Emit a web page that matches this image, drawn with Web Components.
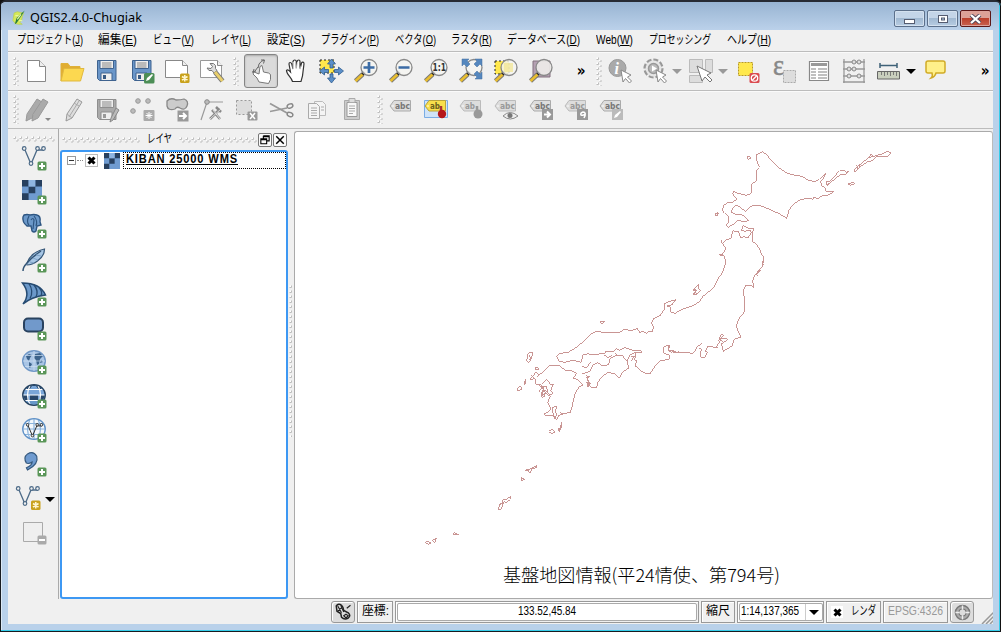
<!DOCTYPE html>
<html lang="ja"><head><meta charset="utf-8"><title>QGIS2.4.0-Chugiak</title>
<style>html,body{margin:0;height:100%;overflow:hidden;background:#111}body{font-family:"Liberation Sans","Noto Sans CJK JP",sans-serif}</style></head>
<body><gis-window></gis-window>
<script>
const define=(name,css,html,init)=>customElements.define(name,class extends HTMLElement{
  constructor(){super();this.attachShadow({mode:'open'})}
  connectedCallback(){this.shadowRoot.innerHTML=`<style>*{box-sizing:border-box}${css}</style>`+(typeof html==='function'?html(this):html);if(init)init(this)}
});
/* One line of text fitted to a given width; the mnemonic letter is underlined. */
define('fit-text',':host{display:block;flex:none;overflow:visible}div{display:inline-block;white-space:nowrap;transform-origin:0 0}',e=>{
  const a=(n,d)=>e.getAttribute(n)||d,k=a('key',''),h=+a('h',16);
  e.style.width=a('w')+'px';e.style.height=h+'px';
  return `<div style="font:${a('weight','400')} ${a('size',12)}px/${h-2}px ${a('font',"Liberation Sans,Noto Sans CJK JP,sans-serif")};height:${h-2}px;vertical-align:top;color:${a('color','#000')};${a('line','')?'text-decoration:underline;':''}letter-spacing:${a('ls','0')}px">${a('text','')}${k?`(<u>${k}</u>)`:''}</div>`},
  e=>{const d=e.shadowRoot.querySelector('div');d.style.transform=`scaleX(${e.getAttribute('w')/d.getBoundingClientRect().width})`});
/* Staggered grip dots, vertical by default. */
define('drag-grip',':host{display:block;flex:none}svg{display:block;width:100%;height:100%}',e=>{
  const h=e.hasAttribute('flat'),s=e.hasAttribute('single');
  const d=(x,y)=>`<rect x="${x}" y="${y}" width="2" height="2" fill="#fff"/><path d="M${x+2} ${y}v2h-2" fill="none" stroke="#bdbdbd"/>`;
  return `<svg><defs><pattern id="p" patternUnits="userSpaceOnUse" width="${h?6:s?5:6}" height="${h?6:5}">${d(.5,.5)}${s?'':d(3,3)}</pattern></defs><rect width="100%" height="100%" fill="url(#p)"/></svg>`});

const plus='<rect x="15.5" y="15.5" width="9" height="9" rx="1.5" fill="#5a9658"/><path d="M20 17v6M17 20h6" stroke="#fff" stroke-width="2"/>';
const star='<rect x="15" y="14.500" width="9.500" height="9.500" rx="1.500" fill="#c9a21c"/><path d="M19.750 16v6.500M17 17.500l5.500 3.500M22.500 17.500l-5.500 3.500" stroke="#fff6cf" stroke-width="1.600"/>';
const floppy=(a,b,c)=>`<path d="M2.500 1.500h18.500v20h-16.500l-2-2z" fill="${a}" stroke="${b}"/><path d="M5 1.500h13.500v8h-13.500z" fill="#eee" stroke="${b}"/><path d="M7 4h9.500M7 6h9.500M7 8h9.500" stroke="#888"/><path d="M6 14h11v7.500h-11z" fill="#eee" stroke="${b}"/><path d="M8 16h3v4h-3z" fill="${c}"/>`;
const lens=(inner,bg='')=>`${bg}<path d="M9 15L1.500 22" stroke="#777" stroke-width="4.500"/><path d="M9 15L1.500 22" stroke="#e9bd2e" stroke-width="2.700"/><path d="M10.500 13l-2 2.500" stroke="#222" stroke-width="3"/><circle cx="15" cy="8.500" r="8" fill="#f4f4f0" fill-opacity=".82" stroke="#888" stroke-width="1.300"/>${inner}`;
const arr='M0-12l4 5h-2.500v4h-3v-4H-4z';
const cur='<path d="M13 11l2 12 2.500-3.500 4 4.500 2-2-4-4 3.500-2z" fill="#fff" stroke="#888"/>';
const tag=(f,s,t='#777',w='abc')=>`<path d="M1 8l4-5.500h16.500v10.500H5z" fill="${f}" stroke="${s}"/><circle cx="4" cy="8" r=".8" fill="#fff"/><text x="6" y="10.800" font-family="DejaVu Sans" font-size="8" font-weight="700" fill="${t}" textLength="${w.length*5}" lengthAdjust="spacingAndGlyphs">${w}</text>`;
const vec=c=>`<path d="M3 4l6 14 6-14h7" fill="none" stroke="${c}" stroke-width="1.300"/><g fill="#f0f0f0" stroke="${c}" stroke-width="1.200"><circle cx="2.200" cy="2.500" r="1.800"/><circle cx="9" cy="17.500" r="1.800"/><circle cx="15.500" cy="2.500" r="1.800"/><circle cx="21.500" cy="2.500" r="1.800"/></g>`;
const checker='<path fill="#6f9bd0" d="M0 0h20v20H0z"/><path fill="#27405f" d="M0 0h6.600v6.600H0zM13.300 0H20v6.600h-6.700zM6.600 6.600h6.700v6.700H6.600zM0 13.300h6.600V20H0z"/><path fill="#8fb5e0" d="M6.600 0h6.700v6.600H6.600z"/>';
const globe=(f,s,g,mid='')=>`<ellipse cx="12" cy="11" rx="11.300" ry="10.300" fill="${f}"/>${mid}<path d="M12 1v20M1 11h22M3 5.500h18M3 16.500h18M8 1.500q-5 9.500 0 19M16 1.500q5 9.500 0 19" fill="none" stroke="${g}" stroke-width="1.200"/><ellipse cx="12" cy="11" rx="11.300" ry="10.300" fill="none" stroke="${s}" stroke-width="1.300"/>`;
const pencil='<path d="M17 1l5 3-10 16-6 3 1-7z" fill="#ddd" stroke="#999"/><path d="M14 5l5 3M7 16l5 4M19 3L9 19" stroke="#aaa" fill="none"/>';
const I={
logo:'<path d="M5 4l5-2 5 1 5 1-2 6-1 6-3 3 4 3h-6l-5-1-4-5z" fill="#d5e85b" stroke="#b7cf45"/><path d="M22 0l-5 8-8 12-3 2 3-10 7-7z" fill="#267b3f"/><path d="M10 14l6-8M7 8h5M13 16h5" stroke="#e7f6a3" stroke-width="2"/>',
new:'<path d="M3.500 1.500h12l6 6v15h-18z" fill="#fff" stroke="#888" transform="translate(-1 0)"/><path d="M14.500 1.500v6h6" fill="#eee" stroke="#888"/>',
open:'<path d="M1 22V4.500h7l2 3h10v3" fill="#e1ad31" stroke="#dfb138"/><path d="M1 22L4 9.500h20L20.500 22z" fill="#fcd850" stroke="#e1b93f"/>',
save:floppy('#6a96c9','#3f638f','#385a83'),
saveas:floppy('#6a96c9','#3f638f','#385a83')+'<rect x="14" y="14" width="10.500" height="10.500" rx="1.500" fill="#4c8e56"/><path d="M16 22l1-3 5-4 1 1-4 5z" fill="#fff"/>',
comp:'<path d="M.5 1.500h17l5 5v12H.5z" fill="#fff" stroke="#888"/><path d="M17.500 1.500v5h5" fill="#eee" stroke="#888"/>'+star,
manage:'<path d="M.5 1.500h17l4 5v12H.5z" fill="#fff" stroke="#999"/><path d="M17.500 1.500v5h5" fill="#eee" stroke="#888"/><path d="M10 4.500q4-1 5.500 2v3l1.500 2-3 2.500-2-2.500H9l-2-2.500 4 .5 1.500-2z" fill="#ddd" stroke="#777"/><path d="M15 13l7.500 9" stroke="#777" stroke-width="5"/><path d="M15 13l7.500 9" stroke="#e9cf6c" stroke-width="3"/>',
touch:'<g transform="translate(1 0)"><path d="M8 23l-2-4-4-4 1-2 5 2 1-7.500 2-1 1.500 6.500 5 1 2 1.500v5l-2 4z" fill="#fff" stroke="#777"/><path d="M1 13l4-1M3 10l-1 4M7 9l1-4q2-3 5-4M10 1l3.500 0-1 3.500M4 12l3-4" fill="none" stroke="#666"/></g>',
pan:'<path d="M8 22.500c-1-4-6-7-6-11 1-1.500 3 .5 4 1.500L4.500 5c0-2 2-2 2.800 0l1.200 5V2.500c.5-2 3-2 3.300 0v7l.7-7c.5-2 3-2 3 0v7.500l1.500-6c.8-1.500 2.500-1 2.500.8l-1.500 12-1.500 5.700z" transform="translate(.5 0)" fill="#fff" stroke="#333" stroke-width="1.200"/><path d="M6.500 6l2 6v-9h2.500v8l2-8h1.500v8l2.500-5v8l-3 7H9z" fill="#fff" opacity=".6"/>',
pansel:'<path d="M1 1h14v13H1z" fill="#ffe84d" stroke="#222" stroke-dasharray="2 2"/>'+[0,90,180,270].map(r=>`<path d="${arr}" transform="translate(12.500 12) rotate(${r})" fill="#5b8fc8" stroke="#315e91" stroke-width=".8"/>`).join(''),
zin:lens('<path d="M15 3v11M9.500 8.500h11" stroke="#3c6ca5" stroke-width="2.700"/>'),
zout:lens('<path d="M9.500 8.500h11" stroke="#3c6ca5" stroke-width="2.700"/>'),
znat:lens('<text x="8.500" y="12" font-family="DejaVu Sans" font-size="10" font-weight="700" fill="#333" textLength="13.500" lengthAdjust="spacingAndGlyphs">1:1</text>'),
zfull:lens('<g fill="#5587be" stroke="#416f9f" stroke-width=".5"><path d="M3 0h7L8 2l3 3-3 3-3-3-2 2zM23 0v7l-2-2-3 3-3-3 3-3-2-2zM23 20h-7l2-2-3-3 3-3 3 3 2-2z"/></g>'),
zsel:lens('','<path d="M1 2h14v13H1z" fill="#ffe84d" stroke="#222" stroke-dasharray="2 2"/>')+'<path d="M10 4h9v9h-9z" fill="#f2e690" opacity=".7"/>',
zlay:'<path d="M4 2h17v16H4z" fill="#b4a0b2" stroke="#83717f"/>'+lens(''),
ident:'<circle cx="9.500" cy="9" r="8.500" fill="#aaa" stroke="#999"/><text x="6.500" y="14.500" font-family="Liberation Serif" font-style="italic" font-weight="700" font-size="16" fill="#fff">i</text>'+cur,
action:'<circle cx="10.500" cy="9.500" r="9" fill="#e6e6e6" stroke="#999" stroke-width="2.200" stroke-dasharray="5 2"/><circle cx="10.500" cy="9.500" r="5" fill="#bbb" stroke="#999" stroke-width="1.500"/><path d="M9 6.500l5 3-5 3z" fill="#fff"/>'+cur,
select:'<path d="M.5.500h13v13H.500zM16.500.500h7v13h-7zM.500 16.500h13v7H.500z" fill="#ddd" stroke="#bbb"/><path d="M8 7l5 15 3-4 5 5 2-2-5-5 4-2z" fill="#fff" stroke="#777"/>',
desel:'<path d="M2.500 3.500h14v13h-14z" fill="#ffe84d" stroke="#b89a22" stroke-dasharray="2 1"/><rect x="13.500" y="14" width="10" height="10" rx="1.500" fill="#da4b50"/><circle cx="18.500" cy="19" r="3.200" fill="none" stroke="#fff" stroke-width="1.300"/><path d="M16.500 21l4-4" stroke="#fff" stroke-width="1.300"/>',
eps:'<text x="1" y="15.500" font-family="Liberation Serif" font-size="30" font-weight="400" fill="#888" stroke="#888" stroke-width=".5" textLength="11" lengthAdjust="spacingAndGlyphs">ε</text><path d="M11.500 11.500h12v12h-12z" fill="#ddd" stroke="#aaa" stroke-dasharray="2 1"/>',
table:'<path d="M2.500 2.500h19v19h-19z" fill="#fff" stroke="#888" stroke-width="1.200"/><path d="M4 4h16v3H4z" fill="#999"/><path d="M4 10h5M11 10h9M4 13h5M11 13h9M4 16h5M11 16h9M4 19h5M11 19h9" stroke="#aaa" stroke-width="1.300"/>',
abacus:'<path d="M2 0v24M22 0v24M1 23h22M1 3h22M1 10h22M1 17h22" stroke="#999" stroke-width="1.300"/><g fill="#ddd" stroke="#888"><circle cx="12" cy="3" r="2"/><circle cx="17" cy="3" r="2"/><circle cx="7" cy="10" r="2"/><circle cx="12" cy="10" r="2"/><circle cx="7" cy="17" r="2"/><circle cx="17" cy="17" r="2"/></g>',
measure:'<path d="M3 6.500h17M3 4v5M20 4v5" stroke="#3e6177" stroke-width="1.500"/><path d="M.5 12.500h22v7.500H.5z" fill="#c9cfbe" stroke="#666"/><path d="M4.500 13v3M7.500 13v4M10.500 13v3M13.500 13v4M16.500 13v3M19.500 13v4" stroke="#666" stroke-width=".8"/>',
tip:'<path d="M4 1.500h15q2 0 2 2v8q0 2-2 2h-7q-1 4-5 5 2-2 1-5H4q-2 0-2-2v-8q0-2 2-2z" transform="translate(0 .5)" fill="#fff08a" stroke="#d1ab27" stroke-width="1.500"/>',
pens:'<g transform="translate(-5 0)">'+pencil.replace('#ddd','#aaa')+'</g><g transform="translate(1 0)">'+pencil.replace('#ddd','#aaa')+'</g><path d="M20 20h6l-3 3z" fill="#888"/>',
pen:pencil,
savegr:floppy('#aaa','#8e8e8e','#999')+'<path d="M21 10l3 2-6 10-3 2 1-4z" fill="#bbb" stroke="#888"/>',
points:'<g fill="#bbb" stroke="#999"><circle cx="8" cy="3" r="2.300"/><circle cx="18" cy="3" r="2.300"/><circle cx="3" cy="13" r="2.300"/></g><g transform="translate(-1.500 0)"><rect x="15" y="12" width="11" height="11" rx="1" fill="#aaa"/><path d="M20.500 14v7M17 17.500h7M18 15l5 5M23 15l-5 5" stroke="#fff"/></g>',
move:'<path d="M2 3q4-4 9-1 5 0 8-1 5 2 3 7-2 5-7 2-3-2-5 1-7 2-8-3z" fill="#ccc" stroke="#888" stroke-width="1.300"/><rect x="12.500" y="12.500" width="11" height="11" fill="#999"/><path d="M14 18h7M18 15l3 3-3 3" fill="none" stroke="#fff" stroke-width="2"/>',
node:'<path d="M1 22L7 4l16 0" fill="none" stroke="#999" stroke-width="1.200"/><circle cx="7" cy="4" r="2.300" fill="#bbb" stroke="#888"/><path d="M10 21l10-10M12 12l8 9M16 9l5 5" stroke="#888" stroke-width="2.500"/><path d="M10 21l11-10M13 12l7 9" stroke="#ddd"/>',
del:'<path d="M1.500 2.500h15v14h-15z" fill="#ddd" stroke="#999" stroke-dasharray="2 2"/><rect x="12.500" y="13.500" width="10" height="9" rx="1" fill="#999"/><path d="M15 15l5 6M20 15l-5 6" stroke="#fff" stroke-width="1.500"/>',
cut:'<g transform="translate(0 2)"><path d="M0 3.500l17 9.500M0 11.500l17-3.500" stroke="#999" stroke-width="1.700"/><g fill="none" stroke="#888" stroke-width="1.400"><ellipse cx="20" cy="6" rx="3" ry="2" transform="rotate(-25 20 6)"/><ellipse cx="20" cy="14.500" rx="3" ry="2" transform="rotate(25 20 14.500)"/></g></g>',
copy:'<path d="M9.500 3.500h8l3 3v11h-11z" fill="#f4f4f4" stroke="#bbb"/><path d="M3.500 5.500h8l3 3v12h-11z" fill="#f4f4f4" stroke="#aaa"/><path d="M6 10h6M6 12.500h6M6 15h6M6 17.500h6M16 9h3M16 12h3" stroke="#aaa"/>',
paste:'<path d="M4.500 2.500h15v19h-15z" fill="#ccc" stroke="#aaa"/><path d="M7 4.500h10v14H7z" fill="#f8f8f8" stroke="#999"/><path d="M9 .500h6v4H9z" fill="#ddd" stroke="#aaa"/><path d="M9 8h6M9 10.500h6M9 13h6M9 15.500h4" stroke="#aaa"/>',
tag:tag('#ddd','#aaa'),
tagon:'<path d="M.5 2.500h23v17H.500z" fill="#cfe3f8" stroke="#7aace4"/>'+tag('#f8df4c','#b9a43b','#6b611c','ab')+'<path d="M17 8v8" stroke="#a33" stroke-width="2.500"/><circle cx="18" cy="16" r="4.200" fill="#b5171b"/>',
tagpin:tag('#ddd','#bbb','#999','ab')+'<path d="M18 8v8" stroke="#999" stroke-width="2.500"/><circle cx="19" cy="16" r="4.500" fill="#999"/>',
tageye:tag('#ddd','#bbb','#999')+'<path d="M9 18q7-7 15 0-8 6-15 0z" fill="#eee" stroke="#888"/><circle cx="16" cy="17.500" r="2.500" fill="#777"/>',
tagmove:tag('#ddd','#aaa')+'<rect x="13" y="11" width="11" height="11" fill="#999"/><path d="M15 16.500h6M18 13.500l3 3-3 3" fill="none" stroke="#fff" stroke-width="2"/>',
tagrot:tag('#ddd','#bbb','#999')+'<rect x="13" y="11" width="11" height="11" fill="#999"/><path d="M20 20q3-6-1-6-3 1-2 3 2 1 4-1" fill="none" stroke="#fff" stroke-width="1.500"/>',
tagedit:tag('#ddd','#aaa')+'<rect x="13" y="11" width="11" height="11" fill="#bbb"/><path d="M15 20l1-3 5-4 1 1-4 5z" fill="#fff"/>',
vector:vec('#4d6b88')+plus, raster:checker+plus,
pg:'<path d="M2 1q3-1 6 0 4-1 7 0 4 1 3 7l1 3-4 1-1 5q-2 2-4 0L9 12H5Q0 8 1 3z" fill="#6b98c9" stroke="#2e5682" stroke-width="1.400"/><path d="M7 2q-3 6 0 9M12 2q4 5 2 10M9 6q2-3 3 0l-1 9" fill="none" stroke="#2e5682" stroke-width="1.200"/>'+plus,
lite:'<path d="M5 15Q9 4 22.500 1q0 7-7 12-5 4-11 4" fill="#a7c6e5" stroke="#345576" stroke-width="1.200"/><path d="M1 23q0-4 4-8 5-6 14-12" fill="none" stroke="#345576" stroke-width="1.500"/><path d="M8 14l4 1M11 10l5 2M14 7l5 1" fill="none" stroke="#7fa3c8"/>'+plus,
mssql:'<path d="M.5 1Q18 1 23.500 13 9 15 1 22 9 12 .5 1z" fill="#6b98c9" stroke="#264b72" stroke-width="1.500"/><path d="M7 1.500q5 8 1 15M12 3q5 6 2 12M17 6q4 3 2 8" fill="none" stroke="#264b72" stroke-width="1.300"/>'+plus,
oracle:'<rect x="2" y="2.500" width="19" height="13" rx="4" fill="#7199cb" stroke="#29425f" stroke-width="2"/>'+plus,
wms:'<ellipse cx="12" cy="11" rx="11.300" ry="10.300" fill="#a9c5e5" stroke="#6f97c6" stroke-width="1.400"/><path d="M4 6l3-2 3 1-2 3-1 3-2-2zM13 4l5-1 3 3-3 3-1 5-2 1-1-5-2-2zM7 12l3 2-2 4-1-1zM19 10l2 2-3 1z" fill="#3c638b"/><path d="M12 1v20M1 11h22M3 5.500h18M3 16.500h18" stroke="#cfe0f2" stroke-width=".7"/>'+plus,
wcs:globe('#7aa6d8','#24415f','#fff','<path d="M4 4q8-6 16 0l-3 2-3-4h-4L7 6zM1 11h4.500l1.500 5.500H3zM8 11h8v5.500H8zM18.500 11H23l-2 5.500h-4z" fill="#29486b"/><path d="M5 18q7 5 14 0l-3-1h-8z" fill="#6898c9"/>').replace('M12 1v20','')+plus,
wfs:globe('#f4f8fc','#5f91c7','#8cb4dc')+'<g transform="translate(4 5) scale(.72)">'+vec('#222')+'</g>'+plus,
comma:'<path d="M6 14q-3-5 1-8 5-3 8 2 2 7-8 12l-1-2q5-2 5-5-3 2-5 1z" transform="translate(-2.500 -5) scale(1.150)" fill="#6f9bd0" stroke="#35597e"/>'+plus,
newvec:vec('#4d6b88')+star,
remove:'<path d="M1.500 2.500h19v19h-19z" fill="#efefef" stroke="#aaa"/><rect x="15.500" y="15.500" width="9" height="9" rx="1.500" fill="#aaa"/><path d="M17 20h6" stroke="#fff" stroke-width="2"/>',
checker:'<g transform="scale(1.200)">'+checker+'</g>',
track:'<path d="M3 4q3-4 7-1 3 3 3 7l6 3q4 4 0 7-5 3-9-1l-1-5-5-3z" fill="#ddd" stroke="#222" stroke-width="2"/><path d="M5 4l5 9M9 3l4 9M5 10l6-4M17 7l5-4M13 17l3-2 3 2-3 3z" stroke="#222" stroke-width="1.500" fill="none"/>',
crs:'<circle cx="12" cy="12" r="10" fill="#aaa" stroke="#777" stroke-width="2"/><circle cx="12" cy="12" r="5" fill="#ddd" stroke="#777" stroke-width="1.500"/><path d="M12 2v6M12 16v6M2 12h6M16 12h6" stroke="#eee" stroke-width="2"/>',
x:'<path d="M4 4l16 16M20 4L4 20" stroke="#000" stroke-width="8"/>',
close:'<path d="M3 3l18 18M21 3L3 21" stroke="#000" stroke-width="3.500"/>',
float:'<path d="M8 2h14v12h-6M8 2v6M8 4h14M2 9h14v12H2zM2 11h14" fill="none" stroke="#000" stroke-width="2.600"/>'
};
define('gis-icon',':host{display:block;flex:none;width:24px;height:24px}svg{display:block;width:100%;height:100%;overflow:visible}',e=>`<svg viewBox="0 0 24 24">${I[e.getAttribute('name')]}</svg>`);
define('tool-button',':host{display:flex;flex:none;width:35px;height:34px;align-items:center;justify-content:center}:host([down]){width:34px;border:1px solid #858585;border-radius:3px;background:#dadada;box-shadow:inset 0 1px 2px #aaa}gis-icon{margin-left:1px}',e=>`<gis-icon name="${e.getAttribute('icon')}"></gis-icon>`);
define('drop-arrow',':host{display:flex;flex:none;align-items:center;justify-content:center}i{border:5px solid transparent;border-bottom:0;border-top-color:var(--c,#000)}','<i></i>');
define('more-mark',':host{display:flex;flex:none;align-items:center;justify-content:center;height:34px;font:700 16px "DejaVu Sans",sans-serif}span{transform:scaleX(.85) translateY(-1px)}','<span>»</span>');
const tb=n=>n.split(' ').map(i=>`<tool-button icon="${i}"></tool-button>`).join('');

define('title-bar',`:host{display:flex;height:28px;align-items:flex-start;padding:8px 8px 0 10px;background:linear-gradient(#98b4d2,#bbd1ea)}
gis-icon{width:15px;height:16px;margin:0 4px 0 0}.sp{flex:1}.b{width:31px;height:17px;border:1px solid #5c708b;border-radius:2px;background:linear-gradient(#c4d5e8 0 48%,#a1b9d2 50%,#b7cce2);display:flex;align-items:center;justify-content:center;margin-left:2px;box-shadow:inset 0 0 0 1px #d4e1ef}.c{background:linear-gradient(#dda197 0 45%,#bc402c 50%,#c96250);border-color:#5c1717;box-shadow:inset 0 0 0 1px #dda39c}svg{display:block}`,
`<gis-icon name="logo"></gis-icon><fit-text text="QGIS2.4.0-Chugiak" w="112" font="Noto Sans,sans-serif" size="13" h="17"></fit-text><div class="sp"></div>
<div class="b"><svg width="13" height="12"><rect x="1.500" y="6.500" width="10" height="4" fill="#fff" stroke="#555c70"/></svg></div><div class="b"><svg width="12" height="10"><rect x="1.500" y="1.500" width="9" height="7" fill="#fff" stroke="#555c70"/><rect x="4.500" y="4" width="3" height="2" fill="#b7cce2" stroke="#555c70"/></svg></div><div class="b c"><svg width="13" height="10"><path d="M2 1l9 8M11 1L2 9" stroke="#53485a" stroke-width="4"/><path d="M2 1l9 8M11 1L2 9" stroke="#fff" stroke-width="2.300"/></svg></div>`);

const menus=[['プロジェクト','J',66,15],['編集','E',39,16],['ビュー','V',41,17],['レイヤ','L',40,16],['設定','S',38,16],['プラグイン','P',58,16],['ベクタ','O',41,15],['ラスタ','R',41,15],['データベース','D',73,16],['Web','W',37,16],['プロセッシング','',62,16],['ヘルプ','H',44,0]];
define('menu-bar',':host{display:flex;height:21px;padding:3px 0 0 9px;background:#f0f0f0}',menus.map(m=>`<fit-text text="${m[0]}" key="${m[1]}" w="${m[2]}" style="margin-right:${m[3]}px"></fit-text>`).join(''));

define('tool-bars',`:host{display:block;background:#f0f0f0}.r{display:flex;align-items:center;border-top:1px solid #bcbcbc;box-shadow:inset 0 1px #fafafa}.a{height:39px;padding-top:0}.z{height:39px;border-bottom:1px solid #bcbcbc}drag-grip{width:6px;height:29px;margin:0 0 0 5px}drag-grip.n{margin:0 5px 0 4px}`,
`<div class="r a"><drag-grip></drag-grip>${tb('new open save saveas comp manage')}<drag-grip class="n"></drag-grip><tool-button icon="touch" down></tool-button>${tb('pan pansel zin zout znat zfull zsel zlay')}<more-mark style="width:46px;margin-right:-8px"></more-mark><drag-grip style="margin:0"></drag-grip><tool-button icon="ident"></tool-button><tool-button icon="action"></tool-button><drop-arrow style="--c:#999;width:12px;margin-right:-1px;margin-left:-1px"></drop-arrow><tool-button icon="select" style="width:36px"></tool-button><drop-arrow style="--c:#999;width:12px;margin-right:-1px;margin-left:-1px"></drop-arrow><tool-button icon="desel" style="width:38px"></tool-button>${tb('eps table abacus measure')}<drop-arrow style="width:11px;margin-left:-1px"></drop-arrow><tool-button icon="tip" style="width:38px"></tool-button><more-mark style="width:24px;margin-left:19px"></more-mark></div>
<div class="r z"><drag-grip></drag-grip>${tb('pens pen savegr points move node del cut copy paste')}<drag-grip style="margin:0 0 0 8px"></drag-grip>${tb('tag tagon tagpin tageye tagmove tagrot tagedit')}</div>`);

define('layer-tools',`:host{display:flex;flex-direction:column;width:51px;flex:none;border-right:1px solid #aaa;background:#f0f0f0}drag-grip{width:42px;height:6px;margin:7px 0 0 5px}.c{display:flex;height:34px;padding:3px 0 0 14px;flex:none}.s{padding-left:8px}drop-arrow{margin:-4px 0 0 5px}`,
`<drag-grip flat></drag-grip><div style="height:1px"></div>${'vector raster pg lite mssql oracle wms wcs wfs comma'.split(' ').map(i=>`<div class="c"><gis-icon name="${i}"></gis-icon></div>`).join('')}<div class="c s"><gis-icon name="newvec"></gis-icon><drop-arrow></drop-arrow></div><div class="c"><gis-icon name="remove"></gis-icon></div>`);

define('layer-panel',`:host{display:flex;flex-direction:column;width:229px;flex:none;padding-left:1px;background:#f0f0f0}header{display:flex;align-items:center;height:21px;padding:0 0 0 2px;flex:none}drag-grip{width:78px;height:6px}fit-text{margin:0 7px}.b{width:14px;height:14px;border:1px solid #777;border-radius:2px;background:#fafafa;display:flex;align-items:center;justify-content:center;margin-left:1px}.b gis-icon{width:10px;height:10px}
.tree{flex:1;border:2px solid #3d98f3;border-radius:3px;background:#fff;padding:0}.row{display:flex;align-items:center;height:17px}.ex{width:9px;height:9px;border:1px solid #999;margin-left:5px;display:flex;align-items:center;justify-content:center}.ex i{width:5px;height:1px;background:#333}.ln{width:6px;border-top:1px dotted #888;margin:0 2px 0 1px}.ck{width:13px;height:13px;border:1px solid #bbb;display:flex;align-items:center;justify-content:center}.ck gis-icon{width:9px;height:9px}.ra{width:16px;height:16px;margin:0 3px 0 6px}.f{flex:1;height:17px;border:1px dotted #000;padding:0 0 0 2px}.f fit-text{margin:0}`,
`<header><drag-grip flat></drag-grip><fit-text text="レイヤ" w="25"></fit-text><drag-grip flat></drag-grip><div class="b" style="margin-left:1px"><gis-icon name="float"></gis-icon></div><div class="b"><gis-icon name="close"></gis-icon></div></header><div class="tree"><div class="row"><div class="ex"><i></i></div><div class="ln"></div><div class="ck"><gis-icon name="x"></gis-icon></div><gis-icon class="ra" name="checker"></gis-icon><div class="f"><fit-text text="KIBAN 25000 WMS" weight="700" line="1" w="112" h="15" size="12" ls="0.9"></fit-text></div></div></div>`);

/* Coastlines: sheets drawn at three units per pixel, each with its own origin. */
define('map-canvas',':host{display:block;flex:1;border:1px solid #aaa;border-right-color:#bbb;border-radius:3px;background:#fff;overflow:hidden}svg{display:block}',
`<svg width="697" height="466" viewBox="295 132 697 466" fill="none" stroke="#c99593"><g stroke-width="3" shape-rendering="crispEdges">
<g transform="translate(680 140) scale(.33333)"><path d="M228 44l10-4 10-5 14 11 6 10 12 10 12 14 14 10 12 8 16 6 26 4 16 6 8 7 22 4 12-7 8-8 10-10-2 10-12 14 2 12 10 6 4 12h24l-16 11-16 1-18 10-10-4-2 6-16-4-24 6-18 12-14 16-4 14-4 13-24-15-12-4-20-10-28-11-20 2-20 17-14-11-14-8-8 7-6 14 12 6 20 2 20 17-14 5-16-6-14 12-18 10-5-6 7-11-1-17-11-8-7-8 4-16 13-8h14l12-11-12-15 2-8 14 6 26 6 14-6 2-28 12-8 2-34 8-8-8-22z"/>
<path d="M202 50l6-2 6 6-10 4zM106 220h7v7h-7zM112 217l4 3M440 134l-1-8 10-2 30-32 14-1 4 6 10-3-12 10-12-2-34 28-8 8M446 128l-4 8M522 97l4-12 14-12-2 12-16 12M526 85l40-32 8-12 6 8 30-8 12-7 10 4-6 10-34 1-18 14-10 1-28 20M568 53l12-4M530 76l4 10M505 132l16-5 4 4-14 5zM40 462l8-10-8-2 16-16 0 10 5 8-14 12z"/>
<path d="M130 308l8-9 16-4 4-23 18 4 6 18 10-4 12 3 10-14-4-8-16 3-10-3 6-14 16 8 14-1-4 38 12 11 10 11 6 18 6 7 2 20-4-2-2 14-10 12-12 14-6 16 2 9 1 13-5-7h-20l-7 16 3 13 2 41-3 12-13 14-10 24 6 14 10 20-20 4-8 22-26 16-3-12-3-10 20-14-8-4-14 2-2 8-10 14 4 6-30-6-8 16 6 2-8 18-12-2-2-14 6-10-10-4M250 362l-4 10 6 2M244 390l-16 14 6 4M238 388l-10 14"/></g>
<g transform="translate(510 240) scale(.33333)"><path d="M576 310l-14 10-12 20-30-3-18 1-6-4-14 3-6-9 4-10-2-4-18 8 2 18 18 6-2 12-28 4-14 16-16 24-20-4-24-20 4-16 -8-4 6-6 0-15h18l-4-6h-22l-26-8-16 8-10-5-8 10-22-2-4 5-36 6-14-4-16 4-4 22-26-6-24 6-18-4-6-14 6-8 28-4 24-14 22-18 24-24 18-8 20 6h42l18-10 24 2 16-6 8 14 8-6 10 7 8-5 12-2 2-12-6-12 8-14 20-10 12-18V190l16-6 18-5-12 15-16 4 10 2 2 16 14 4 16-10 34-12 22-12 12-18 30-24 14-28 12-16 12-32-6-20-16-4 12-2 10-16-12-18v-8M475 315l2 19 12-4 2 9 16-4M626 302l8-20 6 4-12 12 10 6"/>
<path d="M216 380l14 2 12-15M282 345l13 8 12-8M314 338l8 8 15 2M352 362l8-17 15-8M362 363l12-13-12-2M216 402l24-8 10-20 12-6 16 9 18-3 4-18 16-8h22l14 16 4 20-18 12-10 19-12-13-20-5-16 9-16 20-4 16h-16l-14-16 4 14 6-9-8-14 8-8-12 4M230 404l6 28h8"/>
<path d="M148 376l-30 2-18 18-14 8-8-7-12 14-6 8 15-3 3 17 15 2 2 10 8-5-7 17 0 15 8-2-3-8 10-8 10 14-8 20 10 18-10 12-12 2 8 8 20-1 10 12 8-13 15-6 18-2 6-18 8-36 12-22 12-6-10-14-18-8 10-14-16-8-20-2zM95 432l12-12 5 0 10 15 8-4-8 22 7 6-13 9-8-8-12 6 5-16 12 5-3-14-8-3-10 4-6-10M88 455l8-14 12 20M80 410l10-6M126 502l14-2-4 16 4 8-6 12-6-20zM150 515l8 10M60 338h8l-4 18-8 12-6-6 4-20zM58 345l4 10-6 5M75 384l7-3 4 6-8 2zM46 418l-4 18 5-6zM20 450l10-12 6 8-8 6zM65 406l10 11M155 547l-8 28M155 547l0 16-8 10v-10M116 574l10-6 8 8-8 6zM270 246l14-1-8 7zM551 163l9-12-9-4 15-14v12l5 7-12 12z"/></g>
<g transform="translate(410 400) scale(.33333)"><path d="M346 211l14-4 20-10v5l-14 5-6 13-6-9zM333 234l3 8 8-4-5-2-6-4M265 330l3-15 8-4 2-12 14-2 9-8v9l-11 9-8-2-5 14-3 8-9 3M270 312l16-8M132 398v6h14l-8-4zM46 428l7-4 9 5-6 5zM67 421l6-2 7-5-6 13-6-2"/></g></g>
<text x="503" y="582" font-family="Noto Sans CJK JP,sans-serif" font-weight="300" font-size="18" fill="#000" stroke="none" textLength="277" lengthAdjust="spacingAndGlyphs">基盤地図情報(平24情使、第794号)</text></svg>`);

define('status-bar',`:host{display:flex;height:25px;padding:2px 0 1px 323px;background:#f0f0f0;gap:2px}.b{height:22px;border:1px solid #999;box-shadow:inset 1px 1px #fff;display:flex;align-items:center;justify-content:center;flex:none}.in{height:18px;border:1px solid #aaa;border-radius:2px;background:#fff;display:flex;align-items:center;justify-content:center;flex:1}.b gis-icon{width:18px;height:18px}.b .sm{width:17px;height:17px}.bt{background:#ddd;border-radius:3px}.ck{width:12px;height:12px;background:#fff;display:flex;align-items:center;justify-content:center;margin-right:8px}.b .ck gis-icon{width:9px;height:9px}.k{justify-content:flex-start;padding-left:1px}.k fit-text{margin-right:6px}.k drop-arrow{border-left:1px solid #ccc;width:17px;height:16px}svg{margin-left:5px}`,
`<div class="b bt" style="width:24px"><gis-icon name="track"></gis-icon></div><div class="b" style="width:36px"><fit-text text="座標:" w="27"></fit-text></div>
<div class="b" style="width:304px;padding:1px"><div class="in"><fit-text text="133.52,45.84" w="58" size="12"></fit-text></div></div><div class="b" style="width:34px"><fit-text text="縮尺" w="24"></fit-text></div>
<div class="b" style="width:87px;padding:1px"><div class="in k"><fit-text text="1:14,137,365" w="58" size="12"></fit-text><drop-arrow></drop-arrow></div></div><div class="b" style="width:55px"><div class="ck"><gis-icon name="x"></gis-icon></div><fit-text text="レンダ" w="25"></fit-text></div>
<div class="b" style="width:65px"><fit-text text="EPSG:4326" w="55" color="#999"></fit-text></div><div class="b bt" style="width:24px"><gis-icon class="sm" name="crs"></gis-icon></div><svg width="13" height="23"><path d="M1 23L13 11M5 23l8-8M9 23l4-4" stroke="#999" stroke-width="1.500"/></svg>`);

define('gis-window',`:host{display:flex;flex-direction:column;box-sizing:border-box;width:1001px;height:632px;border:1px solid #171b20;border-top:2px solid #272b33;border-right:0;border-radius:6px 6px 0 0;background:#b9d1ea;box-shadow:inset -1px 0 #111,inset -2px 0 #35cdea,inset 0 -1px #35cdea,inset 1px 0 #dce9f5;overflow:hidden}title-bar{margin:0 2px 0 0;flex:none}.body{width:985px;height:594px;margin-left:7px;display:flex;flex-direction:column;flex:none}.main{display:flex;height:470px;background:#f0f0f0}.split{width:6px;padding:156px 0 0 1px;flex:none}.split drag-grip{width:4px;height:152px}map-canvas{margin:2px 0 0}`,
`<title-bar></title-bar><div class="body"><menu-bar></menu-bar><tool-bars></tool-bars><div class="main"><layer-tools></layer-tools><layer-panel></layer-panel><div class="split"><drag-grip single></drag-grip></div><map-canvas></map-canvas></div><status-bar></status-bar></div>`);
</script></body></html>
